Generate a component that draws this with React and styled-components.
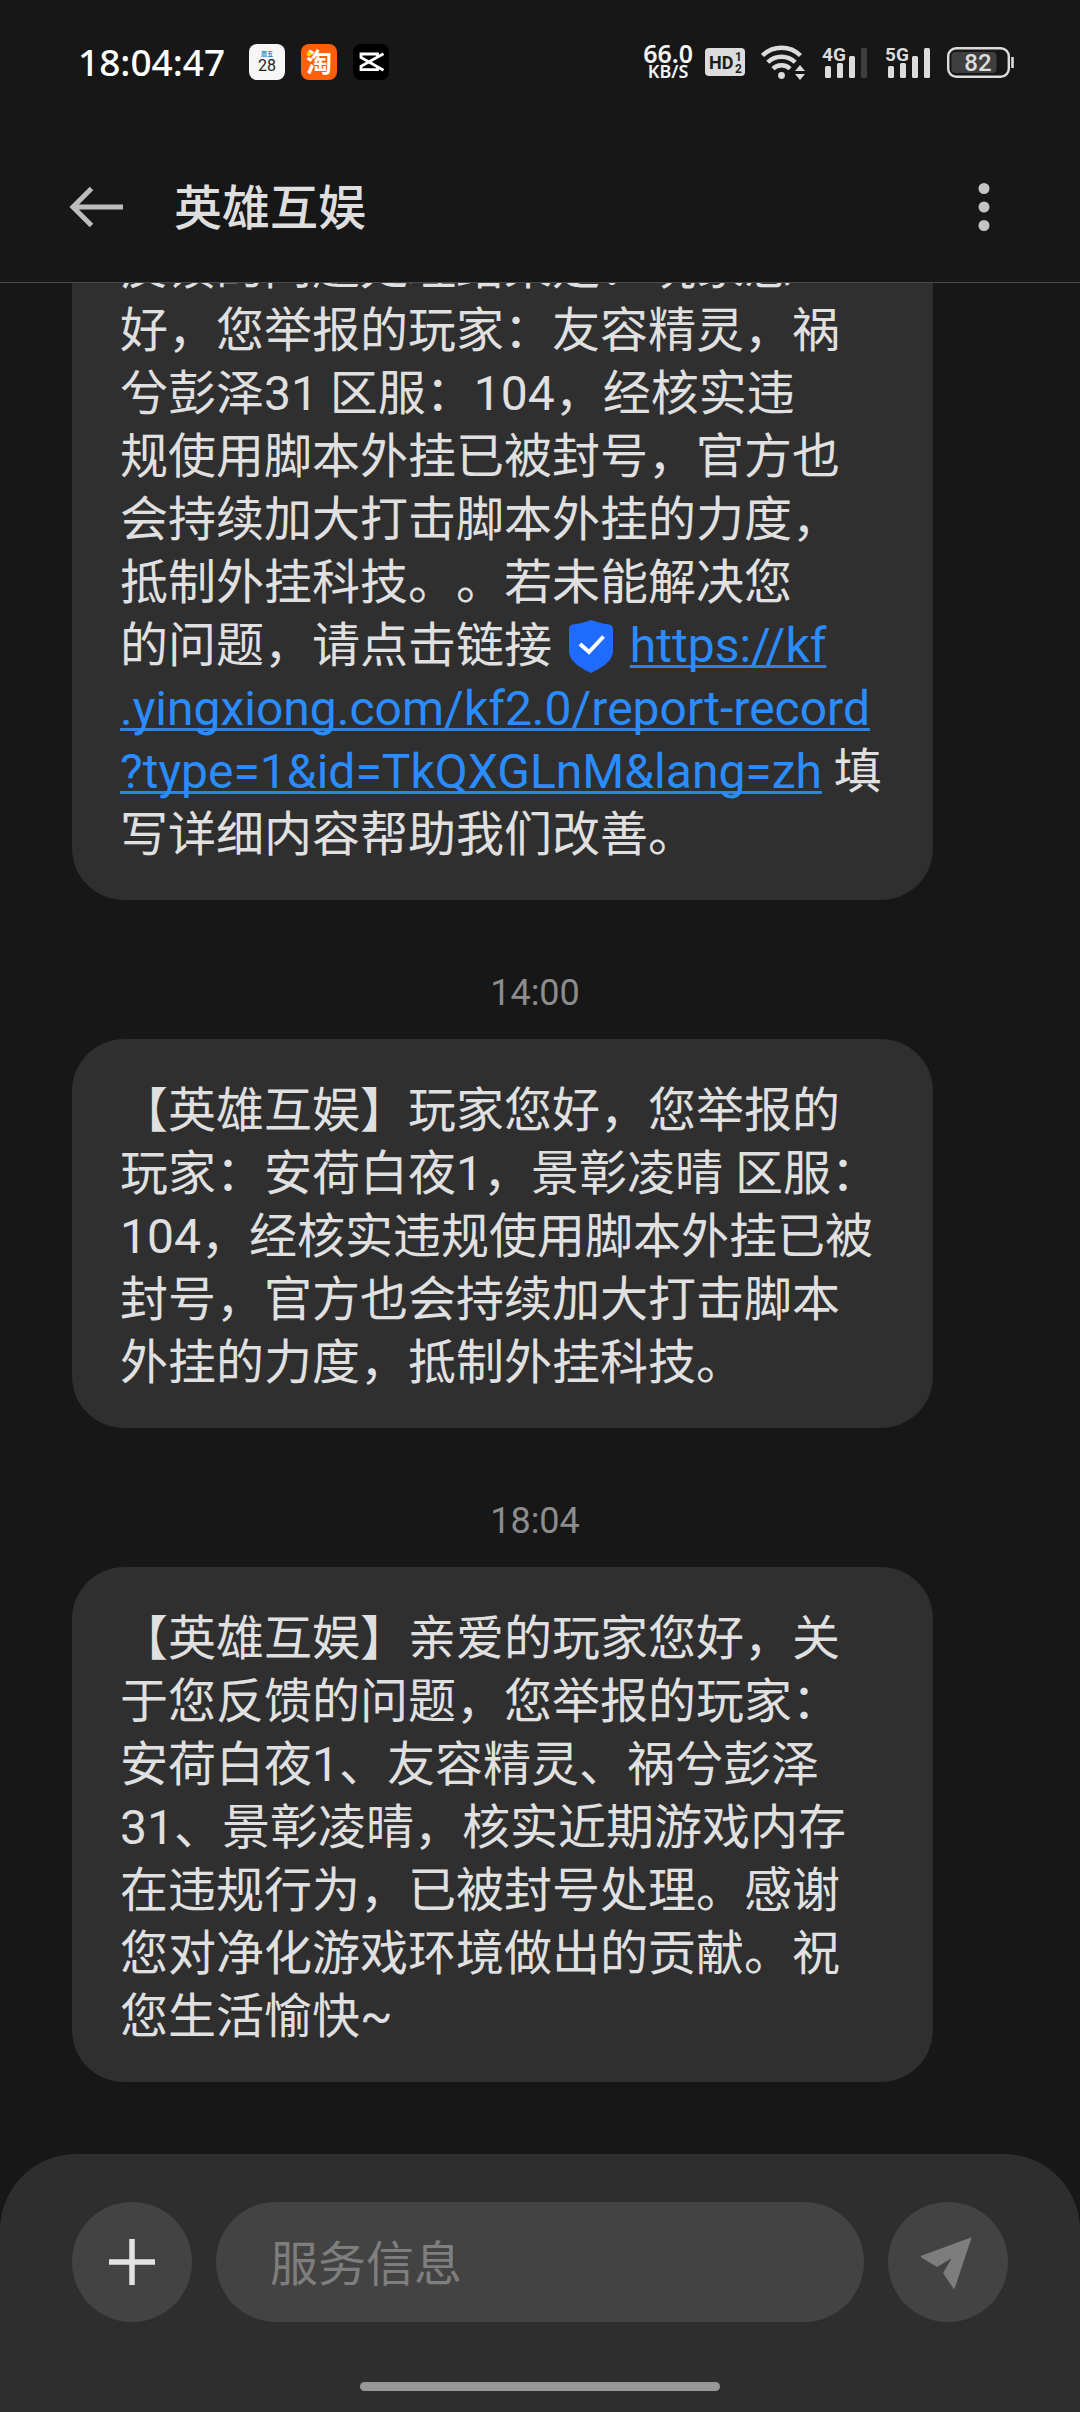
import React from "react";
import styled, { createGlobalStyle } from "styled-components";

const uiFont = `Roboto, "Noto Sans CJK SC", sans-serif`;
const statusFont = `"Noto Sans", "Noto Sans CJK SC", sans-serif`;

const GlobalStyle = createGlobalStyle`
  * { box-sizing: border-box; }
  body {
    margin: 0;
    background: #171717;
    color: #e0e0e0;
    font-family: ${uiFont};
  }
`;

const Screen = styled.div`
  display: flex;
  flex-direction: column;
  height: 100vh;
  background: #171717;
`;

const StatusBar = styled.div`
  flex: none;
  display: flex;
  align-items: center;
  justify-content: space-between;
  height: 132px;
  padding: 0 66px 8px 78px;
  font-family: ${statusFont};
`;

const StatusGroup = styled.div`
  display: flex;
  align-items: center;
  gap: 16px;
`;

const Clock = styled.time`
  margin-right: 8px;
  color: #fff;
  font-size: 37px;
  font-weight: 500;
  line-height: 36px;
`;

const NetSpeed = styled.div`
  display: flex;
  flex-direction: column;
  align-items: center;
  margin-right: -4px;
  color: #f4f4f4;
  font-size: 25px;
  font-weight: 600;
  line-height: 18px;
`;

const SpeedUnit = styled.span`
  font-size: 18px;
`;

const Glyph = styled.svg`
  display: block;
  flex: none;
  overflow: visible;
`;

const Header = styled.header`
  flex: none;
  display: flex;
  align-items: center;
  height: 151px;
  padding: 0 72px 0 70px;
  border-bottom: 1px solid #4a4a4a;
`;

const IconButton = styled.button`
  display: flex;
  align-items: center;
  justify-content: center;
  flex: none;
  width: ${(p) => p.$width}px;
  height: 72px;
  padding: 0;
  border: 0;
  background: transparent;
`;

const Title = styled.h1`
  flex: 1;
  margin: 0 0 0 51px;
  padding-top: 4px;
  color: #dedede;
  font-size: 48px;
  font-weight: 500;
  line-height: 64px;
`;

const Thread = styled.main`
  flex: 1;
  min-height: 0;
  display: flex;
  flex-direction: column;
  justify-content: flex-end;
  overflow: hidden;
  padding: 0 72px;
  padding-bottom: 72px;
`;

const Bubble = styled.p`
  flex: none;
  align-self: flex-start;
  width: 92%;
  margin: 0;
  padding: 40px 48px 34px;
  border-radius: 52px;
  background: #2f2f2f;
  font-size: 48px;
  line-height: 63px;
  white-space: pre;
  text-spacing-trim: space-all;
`;

const Stamp = styled.time`
  flex: none;
  display: block;
  padding: 70px 10px 23px 0;
  color: #8c8c8c;
  font-size: 36px;
  line-height: 46px;
  text-align: center;
`;

const Link = styled.a`
  color: #2a8cff;
  text-decoration: underline;
  text-decoration-color: #2f82e0;
  text-decoration-thickness: 3px;
  text-decoration-skip-ink: none;
  text-underline-offset: 3px;
`;

const Shield = styled.svg`
  display: inline-block;
  width: 44px;
  height: 53px;
  margin: 0 5px;
  vertical-align: -11px;
`;

const Footer = styled.footer`
  flex: none;
  display: flex;
  flex-direction: column;
  align-items: center;
  padding: 48px 72px 21px;
  border-radius: 76px 76px 0 0;
  background: #2e2e2e;
`;

const Composer = styled.form`
  display: flex;
  align-items: center;
  gap: 24px;
  width: 100%;
  margin-bottom: 60px;
`;

const RoundButton = styled.button`
  display: flex;
  align-items: center;
  justify-content: center;
  flex: none;
  width: 120px;
  height: 120px;
  padding: 0;
  border: 0;
  border-radius: 50%;
  background: #434343;
`;

const MessageInput = styled.input`
  flex: 1;
  min-width: 0;
  height: 120px;
  padding: 4px 54px 0;
  border: 0;
  border-radius: 60px;
  outline: 0;
  background: #434343;
  color: #e0e0e0;
  font-family: ${uiFont};
  font-size: 48px;

  &::placeholder {
    color: #7e7e7e;
    opacity: 1;
  }
`;

const HomeIndicator = styled.div`
  width: 360px;
  max-width: 50%;
  height: 9px;
  border-radius: 5px;
  background: #979797;
`;

function CalendarIcon() {
  return (
    <Glyph width="36" height="36" viewBox="0 0 36 36" role="img" aria-label="日历">
      <rect width="36" height="36" rx="8" fill="#f6f6f6" />
      <text x="18" y="12" textAnchor="middle" fontSize="6" fontWeight="700" fill="#1b86dc" fontFamily="Noto Sans CJK SC">
        周五
      </text>
      <text x="18" y="27" textAnchor="middle" fontSize="16" fill="#222" fontFamily="Roboto">
        28
      </text>
    </Glyph>
  );
}

function TaobaoIcon() {
  return (
    <Glyph width="36" height="36" viewBox="0 0 36 36" role="img" aria-label="淘宝">
      <rect width="36" height="36" rx="8" fill="#ff5f0a" />
      <text x="18" y="28" textAnchor="middle" fontSize="26" fontWeight="700" fill="#fff" fontFamily="Noto Sans CJK SC">
        淘
      </text>
      <circle cx="8" cy="10" r="2.4" fill="#ffd800" />
    </Glyph>
  );
}

function CutIcon() {
  return (
    <Glyph width="36" height="36" viewBox="0 0 36 36" role="img" aria-label="剪映">
      <rect width="36" height="36" rx="8" fill="#000" />
      <path
        d="M30.5 9.8 L8 22.4 V25.6 H24.5 V22.8 M30.5 26.2 L8 13.4 V10 H24.5 V13"
        fill="none"
        stroke="#fff"
        strokeWidth="2.8"
      />
    </Glyph>
  );
}

function HdIcon() {
  return (
    <Glyph width="40" height="28" viewBox="0 0 40 28" role="img" aria-label="HD 1 2">
      <rect width="40" height="28" rx="4" fill="#dcdcdc" />
      <g fill="#1c1c1c" fontFamily="Roboto" fontWeight="700">
        <text x="4" y="21" fontSize="18">HD</text>
        <text x="30" y="13" fontSize="12">1</text>
        <text x="30" y="25" fontSize="12">2</text>
      </g>
    </Glyph>
  );
}

function WifiIcon() {
  return (
    <Glyph width="44" height="34" viewBox="0 0 44 34" role="img" aria-label="Wi-Fi">
      <g fill="none" stroke="#dcdcdc" strokeWidth="4.4">
        <path d="M1.5 10.5 A27 27 0 0 1 39.5 10.5" />
        <path d="M6.8 17.3 A19.5 19.5 0 0 1 34.2 17.3" />
        <path d="M12 23.8 A12 12 0 0 1 29 23.8" />
      </g>
      <circle cx="20.5" cy="30.5" r="3.4" fill="#dcdcdc" />
      <path d="M34 26 L39 20 L44 26 Z M34 29 H44 L39 35 Z" fill="#dcdcdc" />
    </Glyph>
  );
}

function SignalIcon({ label, level }) {
  const bars = [
    [4, 20, 12],
    [16, 17, 15],
    [28, 10, 22],
    [40, 2, 30],
  ];
  return (
    <Glyph width="47" height="32" viewBox="0 0 47 32" role="img" aria-label={label}>
      {bars.map(([x, y, h], i) => (
        <rect key={x} x={x} y={y} width="6" height={h} rx="1.5" fill={i < level ? "#dcdcdc" : "#3f3f3f"} />
      ))}
      <text
        x="1"
        y="15"
        fontSize="19"
        fontWeight="700"
        fill="#dcdcdc"
        stroke="#171717"
        strokeWidth="3"
        paintOrder="stroke"
        fontFamily="Roboto"
      >
        {label}
      </text>
    </Glyph>
  );
}

function BatteryIcon() {
  return (
    <Glyph width="67" height="31" viewBox="0 0 67 31" role="img" aria-label="82%">
      <rect x="1.2" y="1.2" width="60.6" height="28.6" rx="8" fill="none" stroke="#dcdcdc" strokeWidth="2.4" />
      <rect x="4.5" y="5" width="45" height="21" rx="4" fill="#3f3f3f" />
      <path d="M65.5 10 V21" stroke="#dcdcdc" strokeWidth="2.6" />
      <text x="31" y="24" textAnchor="middle" fontSize="24" fontWeight="500" fill="#dcdcdc" fontFamily="Roboto">
        82
      </text>
    </Glyph>
  );
}

function ShieldIcon() {
  return (
    <Shield viewBox="0 0 44 53" role="img" aria-label="安全链接">
      <path
        d="M22 0 C28 2 34 3.6 40 4.4 Q44 5 44 9 V31 C44 42 30 49 22 53 C14 49 0 42 0 31 V9 Q0 5 4 4.4 C10 3.6 16 2 22 0 Z"
        fill="#1f6bff"
      />
      <path d="M11 24 L20 32 L34.500 16.500" fill="none" stroke="#fff" strokeWidth="4" />
    </Shield>
  );
}

const reportUrl = "https://kf.yingxiong.com/kf2.0/report-record?type=1&id=TkQXGLnM&lang=zh";

const REPORT_INTRO = `反馈的问题处理结果是：玩家您
好，您举报的玩家：友容精灵，祸
兮彭泽31 区服：104，经核实违
规使用脚本外挂已被封号，官方也
会持续加大打击脚本外挂的力度，
抵制外挂科技。。若未能解决您
的问题，请点击链接 `;

const NOTICE = `【英雄互娱】玩家您好，您举报的
玩家：安荷白夜1，景彰凌晴 区服：
104，经核实违规使用脚本外挂已被
封号，官方也会持续加大打击脚本
外挂的力度，抵制外挂科技。`;

const THANKS = `【英雄互娱】亲爱的玩家您好，关
于您反馈的问题，您举报的玩家：
安荷白夜1、友容精灵、祸兮彭泽
31、景彰凌晴，核实近期游戏内存
在违规行为，已被封号处理。感谢
您对净化游戏环境做出的贡献。祝
您生活愉快~`;

export default function App() {
  return (
    <>
      <GlobalStyle />
      <Screen>
        <StatusBar>
          <StatusGroup>
            <Clock>18:04:47</Clock>
            <CalendarIcon />
            <TaobaoIcon />
            <CutIcon />
          </StatusGroup>
          <StatusGroup>
            <NetSpeed>
              66.0
              <SpeedUnit>KB/S</SpeedUnit>
            </NetSpeed>
            <HdIcon />
            <WifiIcon />
            <SignalIcon label="4G" level={3} />
            <SignalIcon label="5G" level={4} />
            <BatteryIcon />
          </StatusGroup>
        </StatusBar>

        <Header>
          <IconButton type="button" $width={53} aria-label="返回">
            <Glyph width="53" height="40" viewBox="0 0 53 40">
              <path d="M53 20 H4 M21.500 1.500 L3 20 L21.500 38.500" fill="none" stroke="#bdbdbd" strokeWidth="5" />
            </Glyph>
          </IconButton>
          <Title>英雄互娱</Title>
          <IconButton type="button" $width={48} aria-label="更多">
            <Glyph width="12" height="48" viewBox="0 0 12 48" fill="#c4c4c4">
              <circle cx="6" cy="5.500" r="5.500" />
              <circle cx="6" cy="24" r="5.500" />
              <circle cx="6" cy="42.500" r="5.500" />
            </Glyph>
          </IconButton>
        </Header>

        <Thread>
          <Bubble>
            {REPORT_INTRO}
            <ShieldIcon />{" "}
            <Link href={reportUrl}>{"https://kf\n.yingxiong.com/kf2.0/report-record\n?type=1&id=TkQXGLnM&lang=zh"}</Link>
            {" 填\n写详细内容帮助我们改善。"}
          </Bubble>
          <Stamp>14:00</Stamp>
          <Bubble>{NOTICE}</Bubble>
          <Stamp>18:04</Stamp>
          <Bubble>{THANKS}</Bubble>
        </Thread>

        <Footer>
          <Composer onSubmit={(e) => e.preventDefault()}>
            <RoundButton type="button" aria-label="添加">
              <Glyph width="46" height="46" viewBox="0 0 46 46">
                <path d="M0 23 H46 M23 0 V46" stroke="#e3e3e3" strokeWidth="5.500" />
              </Glyph>
            </RoundButton>
            <MessageInput type="text" aria-label="服务信息" placeholder="服务信息" />
            <RoundButton type="submit" aria-label="发送">
              <Glyph width="56" height="56" viewBox="0 0 56 56">
                <path
                  d="M1.500 22.500 L50.500 4.500 L34 54 L24 39 L34 22 L17 32 Z"
                  fill="#7d7d7d"
                  stroke="#7d7d7d"
                  strokeWidth="1.500"
                  strokeLinejoin="round"
                />
              </Glyph>
            </RoundButton>
          </Composer>
          <HomeIndicator />
        </Footer>
      </Screen>
    </>
  );
}
